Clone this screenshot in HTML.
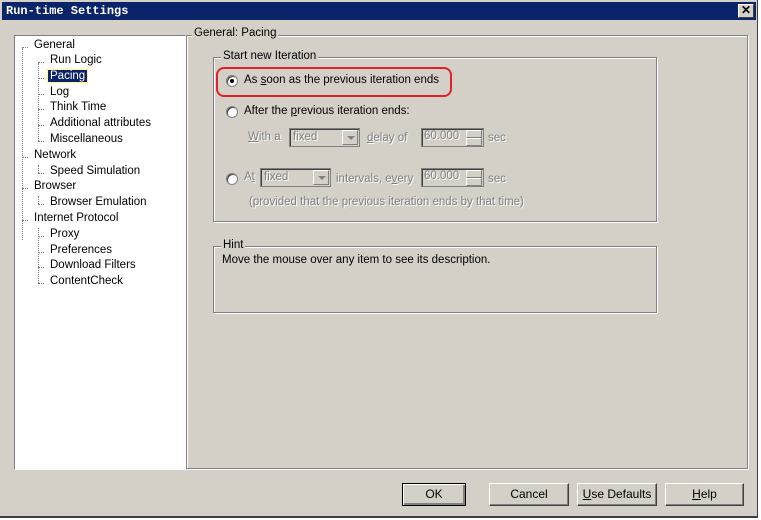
<!DOCTYPE html>
<html><head><style>
*{margin:0;padding:0;box-sizing:border-box}
body{width:761px;height:520px;background:#fff;position:relative;overflow:hidden;font-family:"Liberation Sans",sans-serif;font-size:11.5px;color:#000}
.a{position:absolute;white-space:nowrap}
#win{position:absolute;left:0;top:0;width:758px;height:518px;background:#d4d0c8;border-right:1px solid #404040;border-bottom:2px solid #404040}
#title{position:absolute;left:2px;top:2px;width:754px;height:18px;background:#0a246a;color:#fff;font-family:"Liberation Mono",monospace;font-weight:bold;font-size:12px;line-height:18px;padding-left:4px}
#close{position:absolute;left:738px;top:4px;width:16px;height:14px;background:#d4d0c8;border:1px solid;border-color:#fff #404040 #404040 #fff;font-size:12px;line-height:11px;text-align:center;font-weight:bold}
#tree{position:absolute;left:14px;top:35px;width:172px;height:435px;background:#fff;border:1px solid;border-color:#808080 #fff #fff #808080}
.t{position:absolute;white-space:nowrap;font-size:11.5px}
.dh{position:absolute;border-top:1px dotted #808080;width:6px}
.dv{position:absolute;border-left:1px dotted #808080}
.etch{position:absolute;border:1px solid #808080;box-shadow:inset 1px 1px 0 #fff,1px 1px 0 #fff}
.lbl{position:absolute;background:#d4d0c8;padding:0 2px;white-space:nowrap}
.dis{color:#808080;text-shadow:1px 1px 0 #fff}
.radio{position:absolute;width:12px;height:12px;border-radius:50%;background:#fff;border:1px solid #808080;box-shadow:inset 1px 1px 0 #404040}
.combo{position:absolute;height:19px;border:1px solid #808080;background:#d4d0c8;box-shadow:inset 1px 1px 0 #404040}
.combo .ar{position:absolute;right:1px;top:1px;width:16px;height:15px;border:1px solid;border-color:#fff #808080 #808080 #fff}
.combo .ar:after{content:"";position:absolute;left:4px;top:5px;border:4px solid transparent;border-top:4px solid #808080;border-bottom:0}
.spin{position:absolute;height:19px;border:1px solid #808080;background:#d4d0c8;box-shadow:inset 1px 1px 0 #404040}
.spin .u,.spin .d{position:absolute;right:1px;width:16px;height:8px;border:1px solid;border-color:#fff #808080 #808080 #fff}
.btn{position:absolute;top:483px;height:23px;border:1px solid;border-color:#fff #404040 #404040 #fff;box-shadow:inset -1px -1px 0 #808080;text-align:center;line-height:21px;font-size:12px}
#ti{position:absolute;left:0;top:3px}
</style></head><body>
<div id="win">
<div id="title">Run-time Settings</div>
<div id="close">✕</div>

<div id="tree">
<div class="dv" style="left:7px;top:12px;height:192px"></div>
<div class="dv" style="left:23px;top:27px;height:78px"></div>
<div class="dv" style="left:23px;top:129px;height:8px"></div>
<div class="dv" style="left:23px;top:160px;height:8px"></div>
<div class="dv" style="left:23px;top:192px;height:55px"></div>
</div>
<div id="ti">
<div class="dh" style="left:22px;top:44px"></div><div class="t" style="left:34px;top:36px">General</div>
<div class="dh" style="left:38px;top:59px"></div><div class="t" style="left:50px;top:51px">Run Logic</div>
<div class="dh" style="left:38px;top:75px"></div><div class="t" style="left:48px;top:67px;background:#0a246a;color:#fff;padding:0 2px;outline:1px dotted #ff0">Pacing</div>
<div class="dh" style="left:38px;top:91px"></div><div class="t" style="left:50px;top:83px">Log</div>
<div class="dh" style="left:38px;top:106px"></div><div class="t" style="left:50px;top:98px">Think Time</div>
<div class="dh" style="left:38px;top:122px"></div><div class="t" style="left:50px;top:114px">Additional attributes</div>
<div class="dh" style="left:38px;top:138px"></div><div class="t" style="left:50px;top:130px">Miscellaneous</div>
<div class="dh" style="left:22px;top:154px"></div><div class="t" style="left:34px;top:146px">Network</div>
<div class="dh" style="left:38px;top:170px"></div><div class="t" style="left:50px;top:162px">Speed Simulation</div>
<div class="dh" style="left:22px;top:185px"></div><div class="t" style="left:34px;top:177px">Browser</div>
<div class="dh" style="left:38px;top:201px"></div><div class="t" style="left:50px;top:193px">Browser Emulation</div>
<div class="dh" style="left:22px;top:217px"></div><div class="t" style="left:34px;top:209px">Internet Protocol</div>
<div class="dh" style="left:38px;top:233px"></div><div class="t" style="left:50px;top:225px">Proxy</div>
<div class="dh" style="left:38px;top:249px"></div><div class="t" style="left:50px;top:241px">Preferences</div>
<div class="dh" style="left:38px;top:264px"></div><div class="t" style="left:50px;top:256px">Download Filters</div>
<div class="dh" style="left:38px;top:280px"></div><div class="t" style="left:50px;top:272px">ContentCheck</div>
</div>

<div class="etch" style="left:186px;top:35px;width:562px;height:434px"></div>
<div class="lbl" style="left:192px;top:27px">General: Pacing</div>

<div class="etch" style="left:213px;top:57px;width:444px;height:165px"></div>
<div class="lbl" style="left:221px;top:50px">Start new Iteration</div>
<div style="position:absolute;left:216px;top:67px;width:236px;height:30px;border:2px solid #e0202a;border-radius:8px"></div>
<div class="radio" style="left:226px;top:75px"><div style="position:absolute;left:3px;top:3px;width:4px;height:4px;background:#000;border-radius:50%"></div></div>
<div class="a" style="left:244px;top:74px">As <u>s</u>oon as the previous iteration ends</div>
<div class="radio" style="left:226px;top:106px"></div>
<div class="a" style="left:244px;top:105px">After the <u>p</u>revious iteration ends:</div>
<div class="a dis" style="left:248px;top:131px"><u>W</u>ith a</div>
<div class="combo" style="left:289px;top:128px;width:71px"><span class="dis" style="position:absolute;left:3px;top:2px">fixed</span><div class="ar"></div></div>
<div class="a dis" style="left:367px;top:132px"><u>d</u>elay of</div>
<div class="spin" style="left:421px;top:128px;width:63px"><span class="dis" style="position:absolute;left:2px;top:1px">60.000</span><div class="u" style="top:1px"></div><div class="d" style="top:9px"></div></div>
<div class="a dis" style="left:488px;top:132px">sec</div>
<div class="radio" style="left:226px;top:173px"></div>
<div class="a dis" style="left:244px;top:171px">A<u>t</u></div>
<div class="combo" style="left:260px;top:168px;width:71px"><span class="dis" style="position:absolute;left:3px;top:2px">fixed</span><div class="ar"></div></div>
<div class="a dis" style="left:336px;top:173px">intervals, e<u>v</u>ery</div>
<div class="spin" style="left:421px;top:168px;width:63px"><span class="dis" style="position:absolute;left:2px;top:1px">60.000</span><div class="u" style="top:1px"></div><div class="d" style="top:9px"></div></div>
<div class="a dis" style="left:488px;top:173px">sec</div>
<div class="a dis" style="left:249px;top:196px">(provided that the previous iteration ends by that time)</div>

<div class="etch" style="left:213px;top:246px;width:444px;height:67px"></div>
<div class="lbl" style="left:221px;top:239px">Hint</div>
<div class="a" style="left:222px;top:254px">Move the mouse over any item to see its description.</div>

<div class="btn" style="left:402px;width:64px;border-color:#000;box-shadow:inset 1px 1px 0 #fff,inset -2px -2px 0 #808080">OK</div>
<div class="btn" style="left:489px;width:80px">Cancel</div>
<div class="btn" style="left:577px;width:80px"><u>U</u>se Defaults</div>
<div class="btn" style="left:665px;width:79px"><u>H</u>elp</div>
</div>
</body></html>
